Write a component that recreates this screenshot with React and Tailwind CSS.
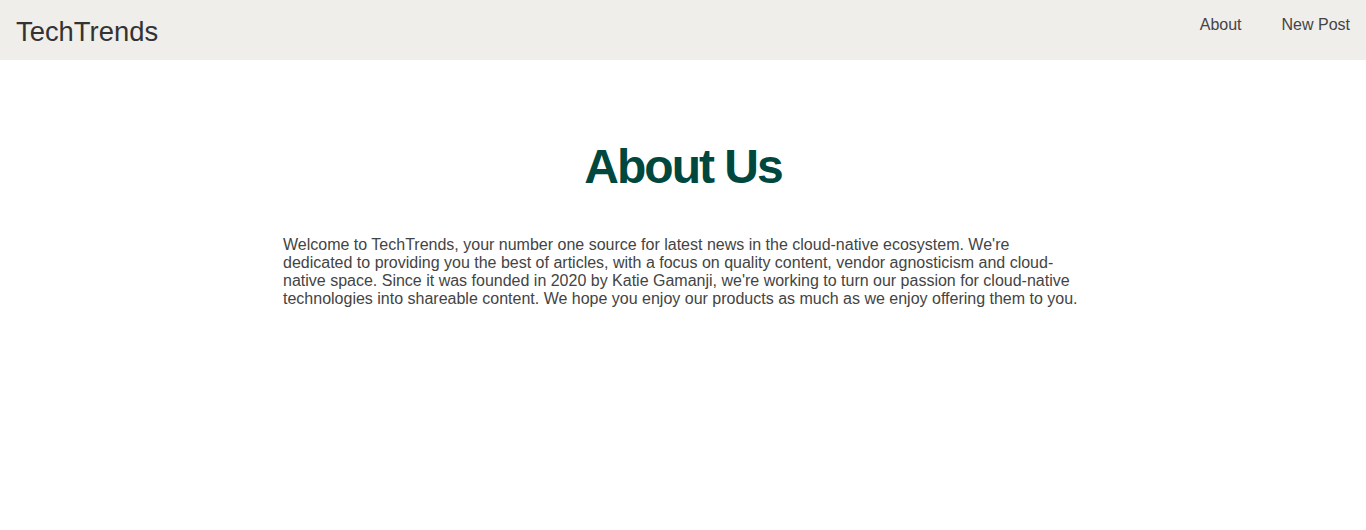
export default function App() {
  return (
    <div className="min-h-screen bg-white font-['Liberation_Sans',Arial,sans-serif]">
      <nav className="flex h-[60px] items-start justify-between bg-[#f0eeea] px-4">
        <a href="#" className="mt-[16px] text-[27.4px] leading-[32px] text-[#333333]">
          TechTrends
        </a>
        <div className="mt-[16px] flex gap-10 text-base leading-[18px] text-[#444444]">
          <a href="#">About</a>
          <a href="#">New Post</a>
        </div>
      </nav>

      <main className="mx-auto w-[800px] pt-[79px]">
        <h1 className="text-center text-[48px] font-bold leading-[55px] tracking-[-2px] text-[#00473e]">
          About Us
        </h1>
        <p className="mt-[42px] text-base leading-[18px] text-[#444444]">
          Welcome to TechTrends, your number one source for latest news in the cloud-native ecosystem. We're dedicated to
          providing you the best of articles, with a focus on quality content, vendor agnosticism and cloud-native space.
          Since it was founded in 2020 by Katie Gamanji, we're working to turn our passion for cloud-native technologies into
          shareable content. We hope you enjoy our products as much as we enjoy offering them to you.
        </p>
      </main>
    </div>
  );
}
